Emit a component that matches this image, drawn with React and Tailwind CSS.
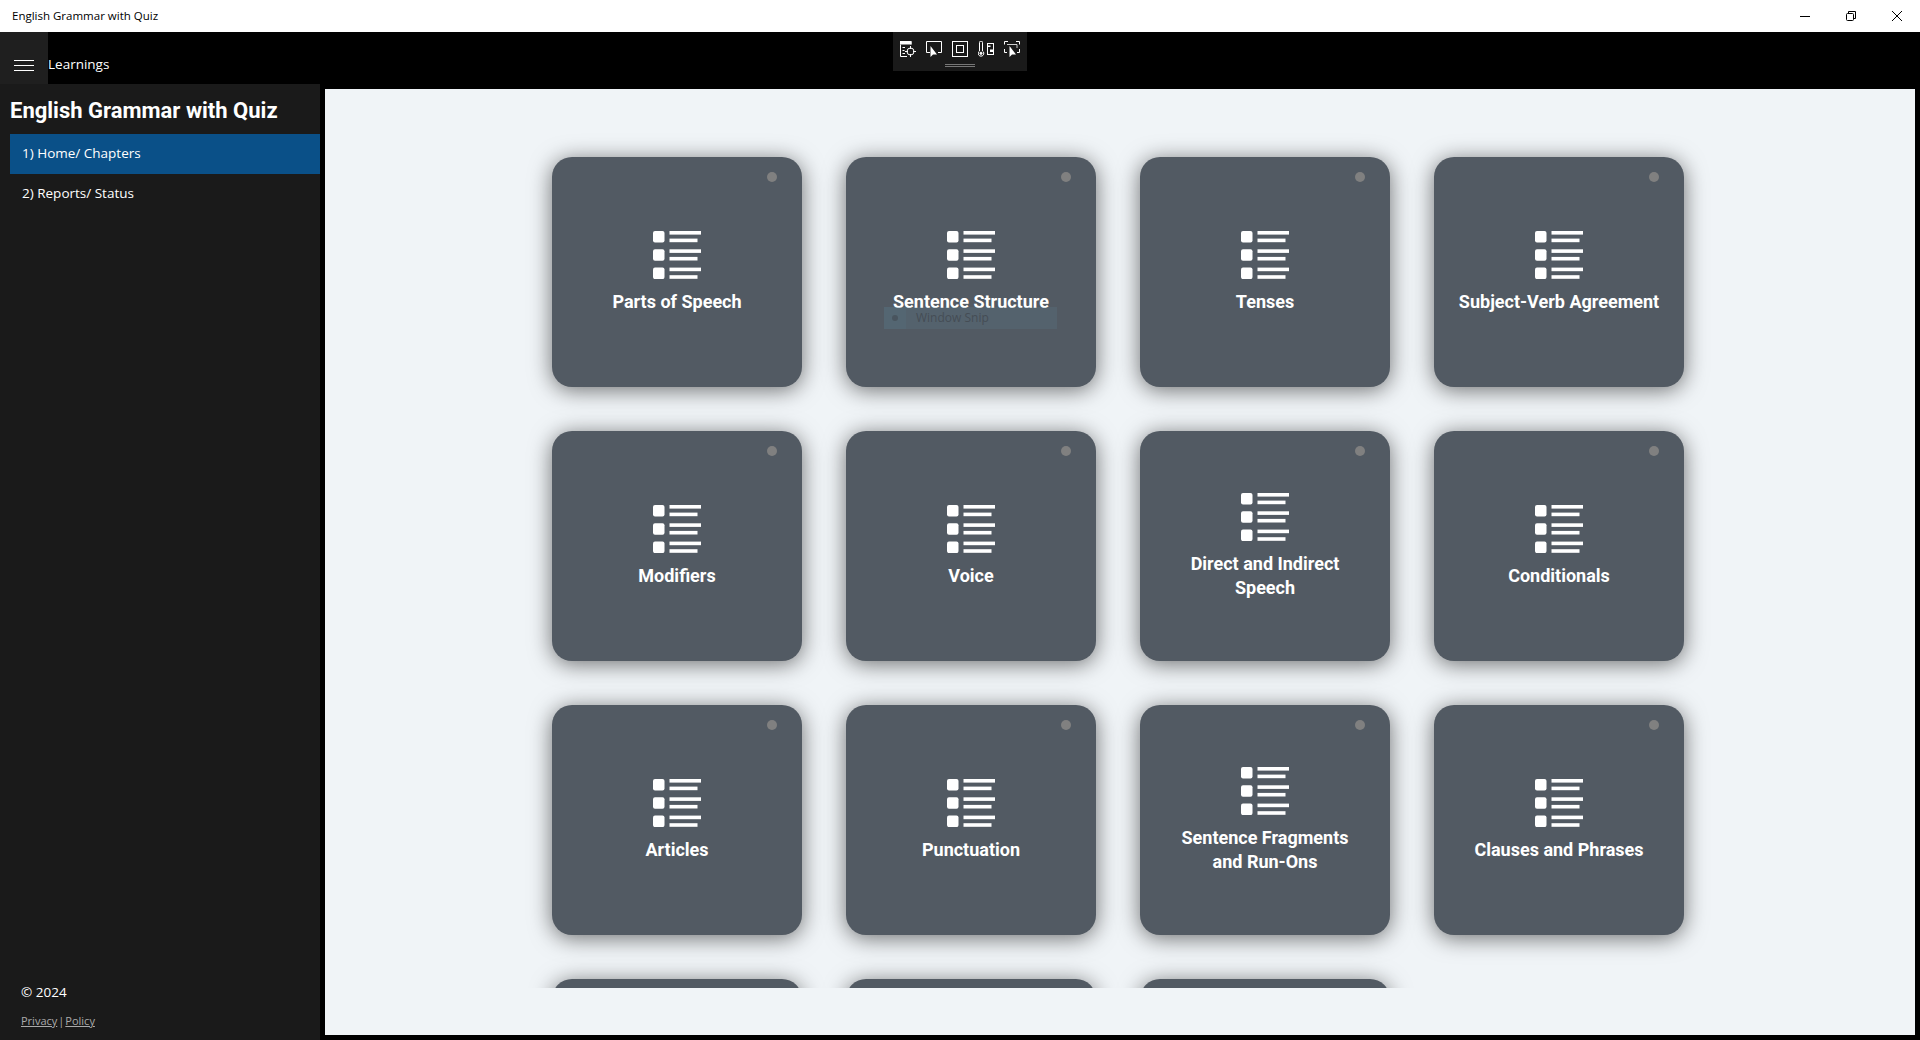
const chapters = [
  'Parts of Speech',
  'Sentence Structure',
  'Tenses',
  'Subject-Verb Agreement',
  'Modifiers',
  'Voice',
  'Direct and Indirect\nSpeech',
  'Conditionals',
  'Articles',
  'Punctuation',
  'Sentence Fragments\nand Run-Ons',
  'Clauses and Phrases',
  // the last row is cut off by the scroll area, only the card tops show
  '',
  '',
  '',
];

function ListIcon() {
  return (
    <svg width="48" height="48" viewBox="0 0 48 48" fill="#fff" className="shrink-0">
      {[0, 18.3, 36.6].map((y) => (
        <g key={y}>
          <rect x="0" y={y} width="11.5" height="11.5" rx="2" />
          <rect x="16.5" y={y} width="31.5" height="3.6" />
          <rect x="16.5" y={y + 7.6} width="28" height="3.6" />
        </g>
      ))}
    </svg>
  );
}

function SnipTools() {
  return (
    <div className="absolute top-8 left-[893px] w-[134px] h-[39px] bg-[#1a1a1a]">
      <div className="flex gap-[10px] pl-[7px] pt-[9px]">
        <svg width="16" height="16" viewBox="0 0 16 16" fill="none" stroke="#fff">
          <path d="M.5 3.5V15.5H7M.5.5H11V3.5" />
          <rect x=".5" y=".5" width="10.5" height="2.5" fill="#fff" />
          <path d="M2.5 6.5H5M2.5 9.5H4.5M2.5 12.5H5" />
          <circle cx="10.5" cy="10.5" r="3.5" />
          <path d="M10.5 5V8M10.5 13V16M5 10.5H8M13 10.5H16" />
        </svg>
        <svg width="16" height="16" viewBox="0 0 16 16" fill="none" stroke="#fff">
          <path d="M4 11.5H.5V.5H15.5V11.5H12" />
          <path d="M4.5 5V16L7 13.5H11Z" fill="#fff" stroke="none" />
        </svg>
        <svg width="16" height="16" viewBox="0 0 16 16" fill="none" stroke="#fff">
          <rect x=".5" y=".5" width="15" height="15" />
          <rect x="4.5" y="4.5" width="7" height="7" />
        </svg>
        <svg width="16" height="16" viewBox="0 0 16 16" fill="none" stroke="#fff">
          <path d="M1.5 10V1.5A1.5 1.5 0 0 1 4.5 1.5V10A2.8 2.8 0 1 1 1.5 10Z" />
          <circle cx="3" cy="12.3" r="1.1" fill="#fff" />
          <rect x="9.5" y="2.5" width="6" height="11" />
          <rect x="12" y="8.5" width="3.5" height="2.5" fill="#fff" stroke="none" />
          <rect x="10" y="4.5" width="2.5" height="1.5" fill="#fff" stroke="none" />
        </svg>
        <svg width="16" height="16" viewBox="0 0 16 16" fill="none" stroke="#fff">
          <path d="M.5 3.5V.5H4M12 .5H15.5V3.5M.5 8V11.5H3M15.5 8V11.5H13" />
          <path d="M3 3.5H13V7" strokeWidth=".8" />
          <path d="M5.5 5V16L8 13.5H12Z" fill="#fff" stroke="none" />
        </svg>
      </div>
      <div className="mt-[7px] mx-auto w-[30px] h-[3px] border-y border-[#777]" />
    </div>
  );
}

export default function App() {
  return (
    <div className="relative h-screen w-full flex flex-col overflow-hidden bg-black font-['Open_Sans',sans-serif]">
      <div className="h-8 shrink-0 bg-white flex items-center justify-between pl-3 text-black">
        <span className="text-[11.5px]">English Grammar with Quiz</span>
        <div className="flex items-center gap-[36px] pr-[18px]">
          <svg width="10" height="10" viewBox="0 0 10 10" stroke="#000" fill="none">
            <path d="M0 5.5H10" />
          </svg>
          <svg width="10" height="10" viewBox="0 0 10 10" stroke="#000" fill="none">
            <rect x=".5" y="2.5" width="7" height="7" rx="1" />
            <path d="M2.5 2.5V.5H9.5V7.5H7.5" />
          </svg>
          <svg width="10" height="10" viewBox="0 0 10 10" stroke="#000" fill="none">
            <path d="M0 0L10 10M10 0L0 10" />
          </svg>
        </div>
      </div>

      <div className="h-[52px] shrink-0 flex items-stretch text-white">
        <button className="w-12 bg-[#1f1f1f] flex items-center justify-center pt-[14px]">
          <svg width="20" height="11" viewBox="0 0 20 11" stroke="#fff" fill="none">
            <path d="M0 .5H20M0 5.5H20M0 10.5H20" />
          </svg>
        </button>
        <span className="self-center text-[13.5px] pt-[13px]">Learnings</span>
      </div>

      <div className="flex-1 flex min-h-0">
        <aside className="w-80 shrink-0 bg-[#1a1a1a] text-white flex flex-col pl-[10px]">
          <h1 className="font-['Roboto',sans-serif] font-bold text-[22px] leading-[54px] h-[50px]">
            English Grammar with Quiz
          </h1>
          <a className="h-10 bg-[#0a5088] pl-3 pb-[2px] flex items-center text-[13.5px]">1) Home/ Chapters</a>
          <a className="h-10 pl-3 pb-[2px] flex items-center text-[13.5px]">2) Reports/ Status</a>
          <div className="mt-auto pl-[11px] pb-[10px]">
            <p className="text-[13.5px] leading-[20px]">© 2024</p>
            <p className="mt-[10px] text-[11px] leading-[18px] text-[#aaa]">
              <span className="underline">Privacy</span>
              <span className="mx-[1px]">|</span>
              <span className="underline">Policy</span>
            </p>
          </div>
        </aside>

        <main className="flex-1 m-[5px] bg-[#f0f4f7] min-w-0 pb-[47px] flex">
          <div className="relative flex-1 overflow-hidden pt-[68px] pl-[227px]">
            <div className="grid grid-cols-[repeat(4,250px)] auto-rows-[230px] gap-[44px]">
              {chapters.map((title, i) => (
                <div
                  key={i}
                  className="relative bg-[#525a63] rounded-[20px] shadow-[0_3px_22px_rgba(0,0,0,0.55)] flex flex-col items-center justify-center px-5 text-white"
                >
                  {title && (
                    <>
                      <span className="absolute top-[15px] right-[25px] size-[10px] rounded-full bg-[#808080]" />
                      <ListIcon />
                      <p className="mt-[11px] font-['Roboto',sans-serif] font-bold text-lg leading-6 text-center whitespace-pre-line">
                        {title}
                      </p>
                    </>
                  )}
                </div>
              ))}
            </div>
          </div>
        </main>
      </div>

      <SnipTools />

      <div className="absolute top-[307px] left-[884px] w-[173px] h-[22px] flex items-center bg-[#5a7a8c]/25 text-[#454d55] text-xs">
        <span className="w-[22px] h-full flex items-center justify-center bg-[#5a8aa8]/10">
          <span className="size-[6px] rounded-full bg-[#454d55]/70" />
        </span>
        <span className="pl-[10px]">Window Snip</span>
      </div>
    </div>
  );
}
